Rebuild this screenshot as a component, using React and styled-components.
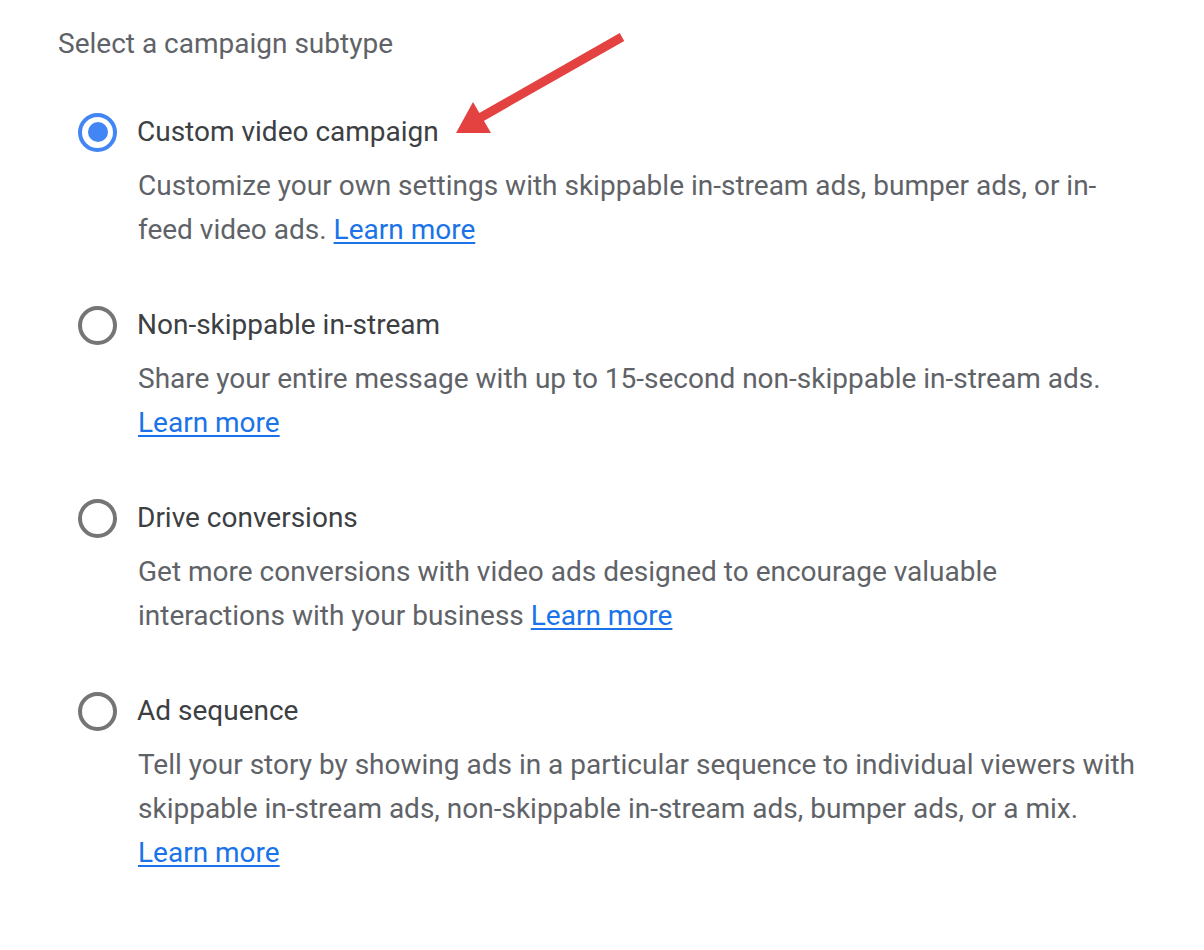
import React, { useState } from "react";
import styled, { createGlobalStyle } from "styled-components";

const GlobalStyle = createGlobalStyle`
  html, body {
    margin: 0;
    padding: 0;
    background: #fff;
  }
  body {
    font-family: Roboto, "Liberation Sans", Arial, sans-serif;
    -webkit-font-smoothing: antialiased;
  }
`;

// Page wrapper
const Page = styled.div`
  position: relative;
  width: 1204px;
  min-height: 950px;
  box-sizing: border-box;
  padding: 24px 0 0 58px;
`;

const Title = styled.h2`
  margin: 0;
  font-size: 28px;
  font-weight: 400;
  line-height: 40px;
  color: #5f6368;
`;

const OptionList = styled.div`
  display: flex;
  flex-direction: column;
  gap: 53px;
  margin-top: 48px;
  padding-left: 20px;
  width: 1064px;
`;

const Option = styled.div`
  display: flex;
  flex-direction: column;
  gap: 12px;
`;

const OptionHead = styled.label`
  display: flex;
  align-items: center;
  gap: 20px;
  height: 40px;
  cursor: pointer;
`;

const Radio = styled.span`
  box-sizing: border-box;
  width: 39px;
  height: 39px;
  flex: none;
  border-radius: 50%;
  border: 4px solid ${(p) => (p.$checked ? "#4285f4" : "#757575")};
  display: flex;
  align-items: center;
  justify-content: center;

  &::after {
    content: "";
    width: 20px;
    height: 20px;
    border-radius: 50%;
    background: #4285f4;
    display: ${(p) => (p.$checked ? "block" : "none")};
  }
`;

const Label = styled.span`
  font-size: 28px;
  line-height: 40px;
  color: #3c4043;
`;

const Description = styled.p`
  margin: 0 0 0 60px;
  font-size: 28px;
  line-height: 44px;
  color: #5f6368;
`;

const Link = styled.a`
  color: #1a73e8;
  text-decoration: underline;
  text-underline-offset: 3px;
  text-decoration-thickness: 2px;
`;

const Arrow = styled.svg`
  position: absolute;
  left: 0;
  top: 0;
  pointer-events: none;
`;

const options = [
  {
    id: "custom",
    label: "Custom video campaign",
    text: "Customize your own settings with skippable in-stream ads, bumper ads, or in-feed video ads.",
  },
  {
    id: "nonskip",
    label: "Non-skippable in-stream",
    text: "Share your entire message with up to 15-second non-skippable in-stream ads.",
  },
  {
    id: "conversions",
    label: "Drive conversions",
    text: "Get more conversions with video ads designed to encourage valuable interactions with your business",
  },
  {
    id: "sequence",
    label: "Ad sequence",
    text: "Tell your story by showing ads in a particular sequence to individual viewers with skippable in-stream ads, non-skippable in-stream ads, bumper ads, or a mix.",
  },
];

export default function App() {
  const [selected, setSelected] = useState("custom");

  return (
    <Page>
      <GlobalStyle />
      <Title>Select a campaign subtype</Title>
      <OptionList>
        {options.map((o) => (
          <Option key={o.id}>
            <OptionHead onClick={() => setSelected(o.id)}>
              <Radio $checked={selected === o.id} />
              <Label>{o.label}</Label>
            </OptionHead>
            <Description>
              {o.text} <Link href="#">Learn more</Link>
            </Description>
          </Option>
        ))}
      </OptionList>
      <Arrow width="700" height="160" viewBox="0 0 700 160">
        <line x1="622" y1="37" x2="478" y2="119" stroke="#e44141" strokeWidth="9" />
        <polygon points="473,102 456,133 491,133" fill="#e44141" />
      </Arrow>
    </Page>
  );
}
